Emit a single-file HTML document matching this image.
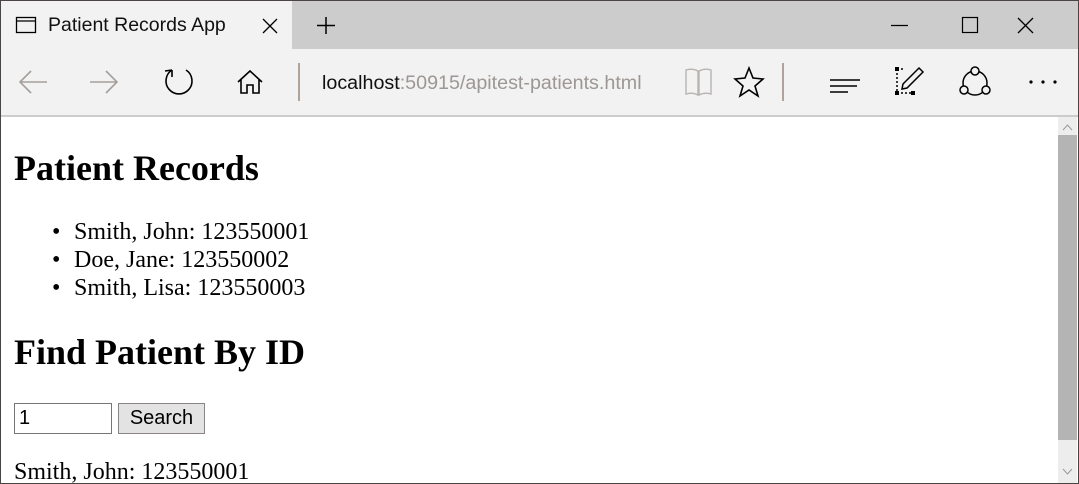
<!DOCTYPE html>
<html><head><meta charset="utf-8"><style>
*{margin:0;padding:0;box-sizing:border-box}
html,body{width:1079px;height:484px;overflow:hidden;background:#fff}
body{position:relative;font-family:"Liberation Serif",serif;color:#000}
.a{position:absolute;white-space:nowrap}
.serif{font-family:"Liberation Serif",serif;line-height:1}
.sans{font-family:"Liberation Sans",sans-serif}
</style></head><body>
<div class="a" style="left:0;top:0;width:1079px;height:484px;border:1px solid #4a4542;z-index:10;pointer-events:none"></div>
<div class="a" style="left:0;top:0;width:1079px;height:49px;background:#cccccc"></div>
<div class="a" style="left:1px;top:1px;width:291px;height:48px;background:#f2f2f2"></div>
<svg class="a" style="left:0;top:0" width="1079" height="49">
<rect x="16.5" y="17.5" width="19" height="15" fill="none" stroke="#000" stroke-width="1.3"/>
<line x1="16.5" y1="21" x2="35.5" y2="21" stroke="#000" stroke-width="1.3"/>
<path d="M263 19 L277 33 M277 19 L263 33" stroke="#000" stroke-width="1.3"/>
<path d="M317 25.5 H335 M326 17 V34" stroke="#000" stroke-width="1.5"/>
<line x1="891" y1="25.5" x2="908" y2="25.5" stroke="#000" stroke-width="1.2"/>
<rect x="962.5" y="17.5" width="15" height="15" fill="none" stroke="#000" stroke-width="1.2"/>
<path d="M1018 18 L1033 33 M1033 18 L1018 33" stroke="#000" stroke-width="1.3"/>
</svg>
<div class="a sans" style="left:48px;top:14px;font-size:19.5px;color:#111">Patient Records App</div>
<div class="a" style="left:0;top:49px;width:1079px;height:66px;background:#f2f2f2"></div>
<div class="a" style="left:0;top:115px;width:1079px;height:2px;background:#cccccc"></div>
<svg class="a" style="left:0;top:49px" width="1079" height="66">
<path d="M20 33 H47 M31 22 L20 33 L31 44" fill="none" stroke="#a59f9b" stroke-width="1.6"/>
<path d="M90 33 H117 M106 22 L117 33 L106 44" fill="none" stroke="#a59f9b" stroke-width="1.6"/>
<path d="M172 21 A13 13 0 1 0 186 21" fill="none" stroke="#000" stroke-width="1.6"/>
<path d="M172 21 L172 28 M172 21 L165 22" fill="none" stroke="#000" stroke-width="1.6"/>
<path d="M238 33 L250 22 L262 33 M241 30 V44 H247 V36 H253 V44 H259 V30" fill="none" stroke="#000" stroke-width="1.6"/>
<line x1="299" y1="14" x2="299" y2="52" stroke="#b0a39c" stroke-width="2"/>
<path d="M686 21 Q692 19 698 22 V46 Q692 43 686 45 Z M699 22 Q705 19 711 21 V45 Q705 43 699 46 Z" fill="none" stroke="#b8b3b0" stroke-width="1.4"/>
<path d="M749 19 L753 29 L763 30 L755 37 L758 47 L749 41 L740 47 L743 37 L735 30 L745 29 Z" fill="none" stroke="#000" stroke-width="1.6"/>
<line x1="783" y1="14" x2="783" y2="52" stroke="#b0a39c" stroke-width="2"/>
<path d="M830 31 H860 M830 37 H857 M830 43 H848" stroke="#000" stroke-width="1.6"/>
<path d="M897 20 V44 H912 M897 20 H903" fill="none" stroke="#000" stroke-width="1.5" stroke-dasharray="2 2"/>
<rect x="895" y="18" width="4" height="4" fill="#000"/><rect x="895" y="42" width="4" height="4" fill="#000"/><rect x="911" y="42" width="4" height="4" fill="#000"/>
<path d="M919 19 L923 23 L907 39 L902 40 L903 35 Z" fill="none" stroke="#000" stroke-width="1.5"/>
<circle cx="975" cy="34" r="12" fill="none" stroke="#000" stroke-width="1.5"/>
<circle cx="975" cy="22" r="4" fill="#f2f2f2" stroke="#000" stroke-width="1.5"/>
<circle cx="964" cy="41" r="4" fill="#f2f2f2" stroke="#000" stroke-width="1.5"/>
<circle cx="986" cy="41" r="4" fill="#f2f2f2" stroke="#000" stroke-width="1.5"/>
<circle cx="1031" cy="33" r="1.6" fill="#000"/><circle cx="1043" cy="33" r="1.6" fill="#000"/><circle cx="1055" cy="33" r="1.6" fill="#000"/>
</svg>
<div class="a sans" style="left:322px;top:72px;font-size:19.7px;color:#111">localhost<span style="color:#9c9794">:50915/apitest-patients.html</span></div>
<div class="a" style="left:1058px;top:117px;width:19px;height:366px;background:#ededed"></div>
<div class="a" style="left:1058px;top:135px;width:19px;height:305px;background:#b4b4b4"></div>
<svg class="a" style="left:1058px;top:117px" width="19" height="366">
<path d="M5 13 L9.5 8 L14 13" fill="none" stroke="#999" stroke-width="1"/>
<path d="M5 352 L9.5 357 L14 352" fill="none" stroke="#999" stroke-width="1"/>
</svg>
<div class="a serif" style="left:14px;top:150px;font-size:36px;font-weight:bold">Patient Records</div>
<div class="a serif" style="left:52px;top:220px;font-size:24px">•</div>
<div class="a serif" style="left:74px;top:220px;font-size:24px">Smith, John: 123550001</div>
<div class="a serif" style="left:52px;top:248px;font-size:24px">•</div>
<div class="a serif" style="left:74px;top:248px;font-size:24px">Doe, Jane: 123550002</div>
<div class="a serif" style="left:52px;top:276px;font-size:24px">•</div>
<div class="a serif" style="left:74px;top:276px;font-size:24px">Smith, Lisa: 123550003</div>
<div class="a serif" style="left:14px;top:334px;font-size:36px;font-weight:bold">Find Patient By ID</div>
<div class="a sans" style="left:14px;top:403px;width:98px;height:31px;border:1px solid #767676;background:#fff;font-size:20px;line-height:29px;padding-left:4px">1</div>
<div class="a sans" style="left:118px;top:403px;width:87px;height:31px;border:1px solid #8a8583;background:#e3e3e3;font-size:20px;line-height:29px;text-align:center">Search</div>
<div class="a serif" style="left:14px;top:460px;font-size:24px">Smith, John: 123550001</div>
</body></html>
